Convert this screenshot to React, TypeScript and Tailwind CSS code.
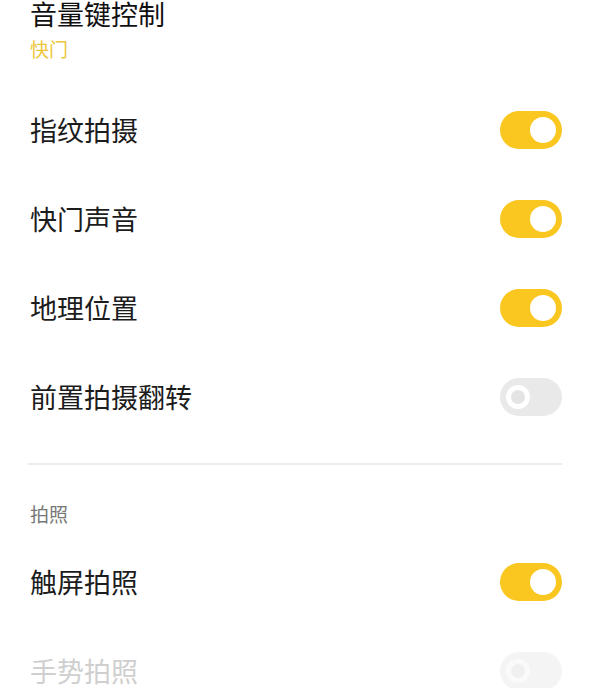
import React from 'react';

interface ToggleProps {
  on: boolean;
  faded?: boolean;
}

function Toggle({ on, faded }: ToggleProps) {
  if (on) {
    return (
      <div className="flex h-[38px] w-[62px] items-center justify-end rounded-full bg-[#fac620] pr-[6px]">
        <div className="h-[26px] w-[26px] rounded-full bg-white" />
      </div>
    );
  }
  return (
    <div
      className={`flex h-[38px] w-[62px] items-center justify-start rounded-full pl-[6px] ${
        faded ? 'bg-[#f4f4f4]' : 'bg-[#e9e9e9]'
      }`}
    >
      <div
        className={`flex h-[24px] w-[24px] items-center justify-center rounded-full ${
          faded ? 'bg-[#fafafa]' : 'bg-white'
        }`}
      >
        <div className={`h-[14px] w-[14px] rounded-full ${faded ? 'bg-[#f0f0f0]' : 'bg-[#e4e4e4]'}`} />
      </div>
    </div>
  );
}

interface RowProps {
  label: string;
  on: boolean;
  faded?: boolean;
}

function SettingRow({ label, on, faded }: RowProps) {
  return (
    <div className="flex h-[89px] items-center justify-between">
      <span className={`text-[27px] leading-none ${faded ? 'text-[#cfcfcf]' : 'text-[#1c1c1c]'}`}>{label}</span>
      <Toggle on={on} faded={faded} />
    </div>
  );
}

export default function App() {
  return (
    <div
      className="h-[688px] w-[600px] overflow-hidden bg-white pl-[30px] pr-[38px]"
      style={{ fontFamily: '"Noto Sans CJK SC", "Noto Sans", sans-serif' }}
    >
      <div className="-mt-[4px] text-[27px] leading-[36px] text-[#111]">音量键控制</div>
      <div className="mt-[5px] text-[19px] leading-[24px] text-[#ecc63a]">快门</div>
      <div className="mt-[24px]">
        <SettingRow label="指纹拍摄" on />
        <SettingRow label="快门声音" on />
        <SettingRow label="地理位置" on />
        <SettingRow label="前置拍摄翻转" on={false} />
      </div>
      <div className="-ml-[2px] mt-[22px] h-[2px] bg-[#ececec]" />
      <div className="mt-[37px] text-[19px] leading-[24px] text-[#777]">拍照</div>
      <div className="mt-[11px]">
        <SettingRow label="触屏拍照" on />
        <SettingRow label="手势拍照" on={false} faded />
      </div>
    </div>
  );
}
